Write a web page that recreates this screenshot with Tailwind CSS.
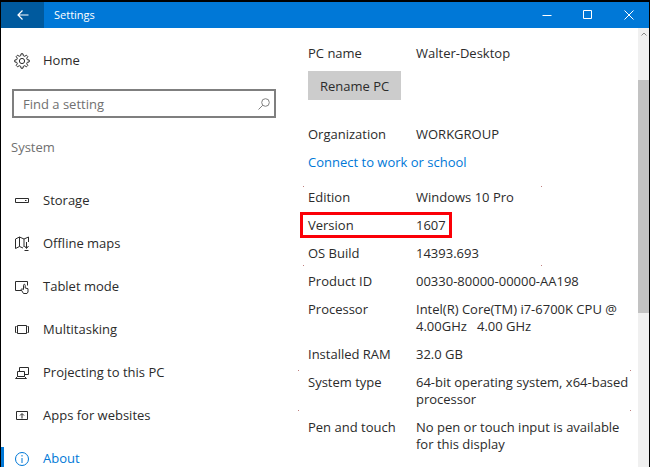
<!DOCTYPE html>
<html lang="en">
<head>
<meta charset="utf-8">
<meta name="viewport" content="width=device-width, initial-scale=1">
<title>Settings</title>
<script src="https://cdn.jsdelivr.net/npm/@tailwindcss/browser@4"></script>
</head>
<body class="bg-white">
<div class="flex h-screen flex-col overflow-hidden border-x border-t-2 border-black bg-white font-['Open_Sans','Noto_Sans',sans-serif] text-[13px] text-[#2b2b2b]">
  <header class="flex h-[26px] shrink-0 items-stretch bg-[#0078d7] text-white">
    <button aria-label="Back" class="flex w-[43px] items-center justify-center bg-[#005a9e]">
      <svg class="h-3 w-3" viewBox="0 0 12 12" fill="none" stroke="currentColor" stroke-width="1.2"><path d="M11.500 6H1M5.500 1.500L1 6l4.500 4.500"/></svg>
    </button>
    <h1 class="flex flex-1 items-center pl-[10px] text-[11px]">Settings</h1>
    <button aria-label="Minimize" class="flex w-[41px] items-center justify-center"><svg class="h-[10px] w-[10px]" viewBox="0 0 10 10" stroke="currentColor"><path d="M0.500 5.500h9"/></svg></button>
    <button aria-label="Maximize" class="flex w-[41px] items-center justify-center"><svg class="h-[10px] w-[10px]" viewBox="0 0 10 10" fill="none" stroke="currentColor"><path d="M.5.5h8v8h-8z"/></svg></button>
    <button aria-label="Close" class="flex w-[41px] items-center justify-center"><svg class="h-[10px] w-[10px]" viewBox="0 0 10 10" stroke="currentColor"><path d="M.5.5l9 9M9.500.5l-9 9"/></svg></button>
  </header>
  <div class="flex min-h-0 flex-1">
    <aside class="flex w-[45%] max-w-[291px] shrink-0 flex-col">
      <a href="#home" class="mt-3 flex h-[42px] shrink-0 items-center gap-[13px] pl-[13px]">
        <svg class="h-4 w-4" viewBox="0 0 16 16" fill="none" stroke="currentColor" stroke-linejoin="round"><path d="M6.700 2.700 7 .8h2l.3 1.900 1.500.6 1.600-1.100 1.400 1.400-1.100 1.600.6 1.500 1.900.3v2l-1.900.3-.6 1.500 1.100 1.600-1.400 1.400-1.600-1.100-1.500.6-.3 1.900H7l-.3-1.900-1.500-.6-1.600 1.100-1.400-1.400 1.100-1.600-.6-1.500L.8 9V7l1.900-.3.6-1.500-1.100-1.600 1.400-1.400 1.600 1.100z"/><circle cx="8" cy="8" r="2.600"/></svg>
        <span>Home</span>
      </a>
      <form class="mr-4 ml-[11px] mt-[7px] flex h-[29px] shrink-0 items-center border-2 border-[#7f7f7f] pr-1" onsubmit="return false">
        <input id="find" type="text" aria-label="Find a setting" placeholder="Find a setting" class="h-full min-w-0 flex-1 bg-transparent pl-[9px] outline-none placeholder:text-[#707070]">
        <button aria-label="Search" class="flex text-[#808080]"><svg class="h-3 w-3" viewBox="0 0 12 12" fill="none" stroke="currentColor"><circle cx="7.500" cy="4.500" r="3.800"/><path d="M4.800 7.200.5 11.500"/></svg></button>
      </form>
      <h2 class="mt-[19px] mb-[22px] pl-[10px] leading-5 text-[#707070]">System</h2>
      <nav class="flex flex-col [&>a]:flex [&>a]:h-[43px] [&>a]:shrink-0 [&>a]:items-center [&>a]:gap-[13px] [&>a]:pl-[13px] [&_svg]:h-4 [&_svg]:w-4">
        <a href="#storage"><svg viewBox="0 0 16 16" fill="none" stroke="currentColor"><path d="M1.500 9.500v-4h13v4zM11 7.500h1.500"/></svg><span>Storage</span></a>
        <a href="#maps"><svg viewBox="0 0 16 16" fill="none" stroke="currentColor"><path d="M9 12 5.500 10.500 1.500 12.500V3l4-2L10 3l4.500-2v5M5.500 1v9.500M10 3v8M12.500 6v6M10.500 10l2 2.500 2-2.500M10.500 14.500h4"/></svg><span>Offline maps</span></a>
        <a href="#tablet"><svg viewBox="0 0 16 16" fill="none" stroke="currentColor"><path d="M7 11.500H1.500v-9h12v4"/><path d="M9.500 10.500V6.300c0-1.300 1.700-1.300 1.700 0V9l2.800.7v3.300l-1 1.500H9.500L7.300 11c-.5-1 .6-1.700 1.300-.8z"/></svg><span>Tablet mode</span></a>
        <a href="#multitasking"><svg viewBox="0 0 16 16" fill="none" stroke="currentColor"><path d="M3.500 3.500h9v8h-9zM2.500 4.500h-1v6h1M13.500 4.500h1v6h-1"/></svg><span>Multitasking</span></a>
        <a href="#projecting"><svg viewBox="0 0 16 16" fill="none" stroke="currentColor"><path d="M5.500 6V2.500h9v7h-4M3.500 6.500h7v5h-7zM3.500 11.500l-2 2h11l-2-2"/></svg><span>Projecting to this PC</span></a>
        <a href="#apps"><svg viewBox="0 0 16 16" fill="none" stroke="currentColor"><path d="M2.500 3.500h11v8h-11zM8 10.500V6M6 7.500l2-2 2 2"/></svg><span>Apps for websites</span></a>
        <a href="#about" aria-current="page" class="relative text-[#0078d7]"><i class="absolute top-[10px] bottom-0 left-0 w-[3px] bg-[#0078d7]"></i><svg viewBox="0 0 16 16" fill="none" stroke="currentColor"><circle cx="8" cy="8" r="6.500"/><path d="M8 7v5M8 4v1.500"/></svg><span>About</span></a>
      </nav>
    </aside>
    <main class="min-w-0 flex-1 overflow-hidden pt-4 pr-2 pl-4 leading-[18px]">
      <dl class="flex"><dt class="w-[108px]">PC name</dt><dd>Walter-Desktop</dd></dl>
      <button class="mt-[9px] h-[29px] bg-[#ccc] px-3">Rename PC</button>
      <dl class="mt-[25px] flex"><dt class="w-[108px]">Organization</dt><dd>WORKGROUP</dd></dl>
      <a href="#connect" class="mt-[10px] block text-[#0078d7]">Connect to work or school</a>
      <table class="mt-3 w-full table-fixed border-collapse text-left leading-[17px] [&_td]:pt-[6px] [&_td]:pb-[5px] [&_th]:pt-[6px] [&_th]:pb-[5px] [&_th]:align-top [&_th]:font-normal">
        <colgroup><col class="w-[108px]"><col></colgroup>
        <tbody>
          <tr class="relative"><th scope="row">Edition<i class="absolute top-[3px] -left-[5px] flex w-[239px] justify-between"><b class="h-px w-px bg-[#c08080]"></b><b class="h-px w-px bg-[#c08080]"></b></i></th><td>Windows 10 Pro</td></tr>
          <tr class="relative"><th scope="row">Version<i class="absolute inset-y-px -left-2 w-[152px] border-[3px] border-[#fb0007]"></i></th><td>1607</td></tr>
          <tr class="relative"><th scope="row">OS Build<i class="absolute bottom-px -left-[5px] flex w-[239px] justify-between"><b class="h-px w-px bg-[#c08080]"></b><b class="h-px w-px bg-[#c08080]"></b></i></th><td>14393.693</td></tr>
          <tr><th scope="row">Product ID</th><td>00330-80000-00000-AA198</td></tr>
          <tr><th scope="row">Processor</th><td>Intel(R) Core(TM) i7-6700K CPU @ 4.00GHz &nbsp; 4.00 GHz</td></tr>
          <tr><th scope="row">Installed RAM</th><td>32.0 GB</td></tr>
          <tr class="relative"><th scope="row">System type<i class="absolute inset-y-[2px] -left-[10px] grid w-[333px] grid-cols-2 content-between justify-items-start"><b class="h-px w-px bg-[#c08080]"></b><b class="h-px w-px justify-self-end bg-[#c08080]"></b><b class="h-px w-px bg-[#c08080]"></b><b class="h-px w-px justify-self-end bg-[#c08080]"></b></i></th><td>64-bit operating system, x64-based processor</td></tr>
          <tr><th scope="row">Pen and touch</th><td>No pen or touch input is available for this display</td></tr>
        </tbody>
      </table>
    </main>
    <div class="flex w-[11px] shrink-0 flex-col bg-[#f0f0f0]">
      <button aria-label="Scroll up" class="flex h-[11px] items-center justify-center text-[#888]"><svg class="h-[6px] w-[6px]" viewBox="0 0 6 6" fill="none" stroke="currentColor"><path d="M.5 4.500 3 2l2.500 2.500"/></svg></button>
      <div class="mt-[41px] h-[53%] bg-[#c2c2c2]"></div>
    </div>
  </div>
</div>
</body>
</html>
